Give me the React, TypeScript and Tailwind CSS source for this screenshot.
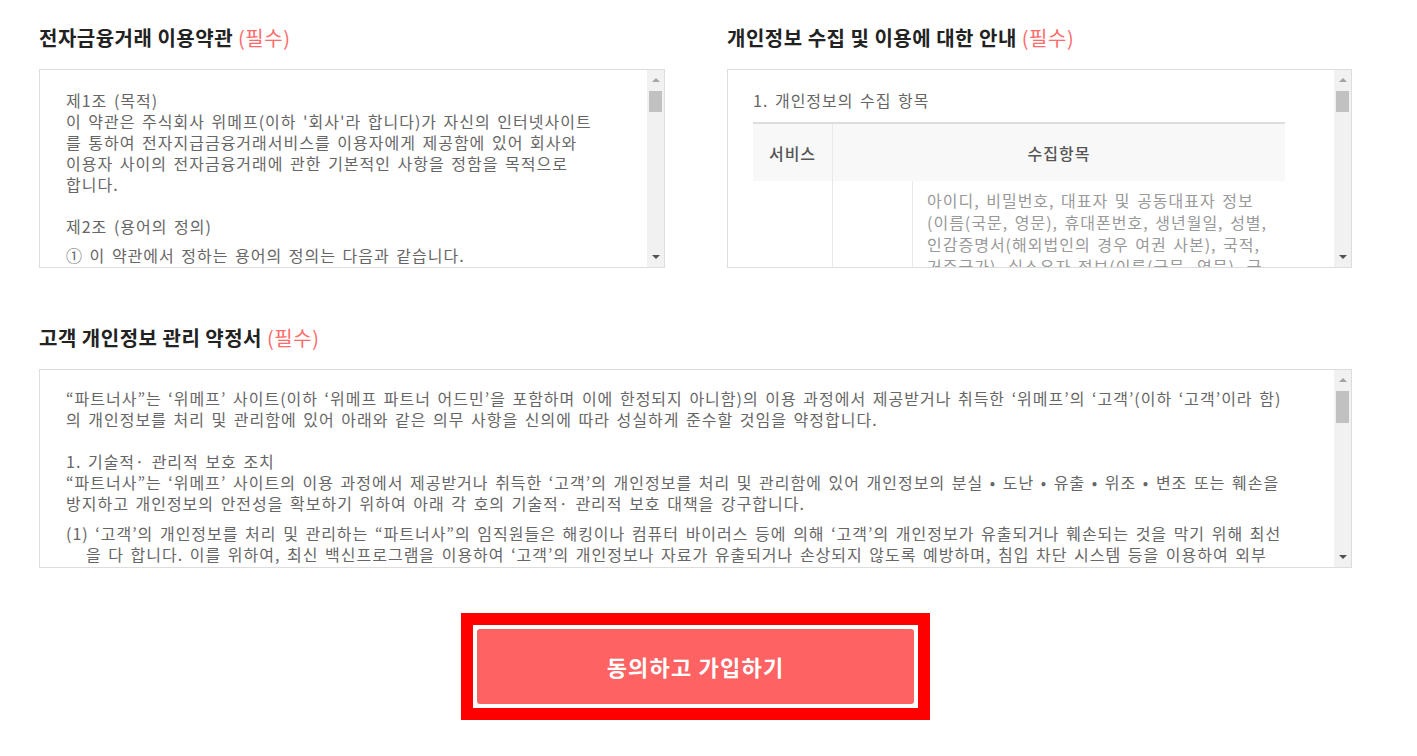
import React from 'react';

const FONT = "font-['Noto_Sans_CJK_KR','Noto_Sans',sans-serif]";

// fake classic scrollbar drawn beside the text box
const ScrollBar = ({ thumb }: { thumb: string }) => (
    <div className="w-[17px] shrink-0 bg-[#f1f1f1] flex flex-col items-center">
        <div className="h-[20px] flex items-center justify-center">
            <div className="w-0 h-0 border-l-[4px] border-r-[4px] border-b-[4px] border-l-transparent border-r-transparent border-b-[#a3a3a3]" />
        </div>
        <div className={`w-[13px] bg-[#c1c1c1] ${thumb}`} />
        <div className="flex-1" />
        <div className="h-[20px] flex items-center justify-center">
            <div className="w-0 h-0 border-l-[4px] border-r-[4px] border-t-[4px] border-l-transparent border-r-transparent border-t-[#505050]" />
        </div>
    </div>
);

const Title = ({ children, className = '' }: { children: React.ReactNode; className?: string }) => (
    <h2 className={`text-[20px] leading-[28px] font-bold text-[#222] tracking-[0.5px] ${className}`}>
        {children} <span className="font-normal text-[#ff6b6b]">(필수)</span>
    </h2>
);

const termsLines = [
    '제1조 (목적)',
    "이 약관은 주식회사 위메프(이하 '회사'라 합니다)가 자신의 인터넷사이트",
    '를 통하여 전자지급금융거래서비스를 이용자에게 제공함에 있어 회사와',
    '이용자 사이의 전자금융거래에 관한 기본적인 사항을 정함을 목적으로',
    '합니다.',
    '\u00a0',
    '제2조 (용어의 정의)',
];

const privacyRows = [
    '아이디, 비밀번호, 대표자 및 공동대표자 정보',
    '(이름(국문, 영문), 휴대폰번호, 생년월일, 성별,',
    '인감증명서(해외법인의 경우 여권 사본), 국적,',
    '거주국가), 실소유자 정보(이름(국문, 영문), 국',
    '적, 생년월일), 사업자 정보',
];

const bodyText = 'text-[16px] tracking-[1px] [word-spacing:2px] whitespace-nowrap';

export default function App() {
    return (
        <div className={`${FONT} bg-white min-h-[756px] w-full pl-[39px] pt-[24px]`}>
            <div className="w-[1313px]">
                <div className="flex gap-[62px]">
                    {/* 전자금융거래 이용약관 */}
                    <section className="w-[626px]">
                        <Title className="mb-[17px]">전자금융거래 이용약관</Title>
                        <div className="h-[199px] border border-[#ddd] flex">
                            <div className={`flex-1 overflow-hidden pl-[26px] pt-[20px] leading-[21px] text-[#666] ${bodyText}`}>
                                {termsLines.map((l, i) => (
                                    <p key={i}>{l}</p>
                                ))}
                                <p className="mt-[8px]">① 이 약관에서 정하는 용어의 정의는 다음과 같습니다.</p>
                                <p>1. '전자금융거래'라 함은 회사가 전자적 장치를 통하여</p>
                                <p>전자금융업무를 제공하고, 이용자가 회사의 종사자와</p>
                            </div>
                            <ScrollBar thumb="h-[21px] mt-[1px]" />
                        </div>
                    </section>

                    {/* 개인정보 수집 및 이용에 대한 안내 */}
                    <section className="w-[625px]">
                        <Title className="mb-[17px]">개인정보 수집 및 이용에 대한 안내</Title>
                        <div className="h-[199px] border border-[#ddd] flex">
                            <div className={`flex-1 overflow-hidden pl-[25px] pt-[20px] ${bodyText}`}>
                                <p className="leading-[21px] text-[#666]">1. 개인정보의 수집 항목</p>
                                <div className="mt-[11px] w-[532px] border-t-2 border-[#ddd]">
                                    <div className="grid grid-cols-[80px_1fr] bg-[#f8f8f8] h-[57px] items-stretch text-[#555] font-medium">
                                        <div className="border-r border-[#e8e8e8] flex items-center justify-center">서비스</div>
                                        <div className="flex items-center justify-center">수집항목</div>
                                    </div>
                                    <div className="grid grid-cols-[80px_80px_1fr] h-[140px]">
                                        <div className="border-r border-[#e8e8e8]" />
                                        <div className="border-r border-[#e8e8e8]" />
                                        <div className="pl-[14px] pt-[8px] leading-[22px] text-[#999]">
                                            {privacyRows.map((l, i) => (
                                                <p key={i}>{l}</p>
                                            ))}
                                        </div>
                                    </div>
                                </div>
                            </div>
                            <ScrollBar thumb="h-[21px] mt-[1px]" />
                        </div>
                    </section>
                </div>

                {/* 고객 개인정보 관리 약정서 */}
                <section className="mt-[56px]">
                    <Title className="mb-[17px]">고객 개인정보 관리 약정서</Title>
                    <div className="h-[199px] border border-[#ddd] flex">
                        <div className={`flex-1 overflow-hidden pl-[26px] pt-[18px] leading-[21px] text-[#666] ${bodyText}`}>
                            <p>“파트너사”는 ‘위메프’ 사이트(이하 ‘위메프 파트너 어드민’을 포함하며 이에 한정되지 아니함)의 이용 과정에서 제공받거나 취득한 ‘위메프’의 ‘고객’(이하 ‘고객’이라 함)</p>
                            <p>의 개인정보를 처리 및 관리함에 있어 아래와 같은 의무 사항을 신의에 따라 성실하게 준수할 것임을 약정합니다.</p>
                            <p>&nbsp;</p>
                            <p>1. 기술적· 관리적 보호 조치</p>
                            <p>“파트너사”는 ‘위메프’ 사이트의 이용 과정에서 제공받거나 취득한 ‘고객’의 개인정보를 처리 및 관리함에 있어 개인정보의 분실 • 도난 • 유출 • 위조 • 변조 또는 훼손을</p>
                            <p>방지하고 개인정보의 안전성을 확보하기 위하여 아래 각 호의 기술적· 관리적 보호 대책을 강구합니다.</p>
                            <div className="mt-[9px]">
                                <p>(1) ‘고객’의 개인정보를 처리 및 관리하는 “파트너사”의 임직원들은 해킹이나 컴퓨터 바이러스 등에 의해 ‘고객’의 개인정보가 유출되거나 훼손되는 것을 막기 위해 최선</p>
                                <p className="pl-[20px]">을 다 합니다. 이를 위하여, 최신 백신프로그램을 이용하여 ‘고객’의 개인정보나 자료가 유출되거나 손상되지 않도록 예방하며, 침입 차단 시스템 등을 이용하여 외부</p>
                                <p className="pl-[20px]">로부터의 무단 접근을 통제합니다.</p>
                            </div>
                        </div>
                        <ScrollBar thumb="h-[32px] mt-[1px]" />
                    </div>
                </section>

                {/* 동의 버튼 */}
                <div className="mt-[45px] flex justify-center">
                    <div className="border-[12px] border-[#ff0000] p-[4px]">
                        <button className="w-[437px] h-[75px] bg-[#ff6262] rounded-[3px] text-white text-[22px] font-bold tracking-[1.2px]">
                            동의하고 가입하기
                        </button>
                    </div>
                </div>
            </div>
        </div>
    );
}
